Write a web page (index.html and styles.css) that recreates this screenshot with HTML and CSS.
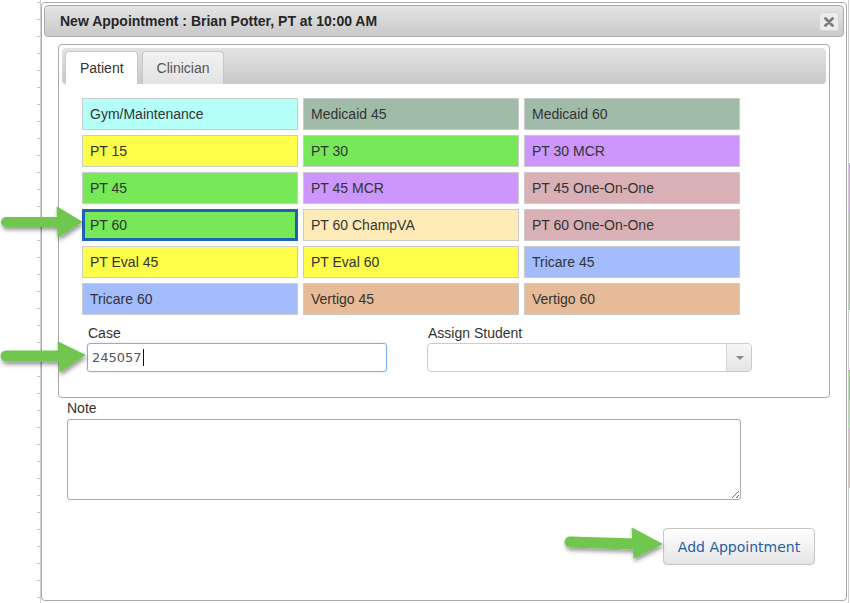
FILE: index.html
```html
<!DOCTYPE html>
<html>
<head>
<meta charset="utf-8">
<title>New Appointment</title>
<link rel="stylesheet" href="styles.css">
</head>
<body>
<div class="dialog">
  <div class="titlebar">
    <span class="title">New Appointment : Brian Potter, PT at 10:00 AM</span>
    <button class="close" aria-label="Close">
      <svg width="10" height="10" viewBox="0 0 10 10"><path d="M1.5 1.5 L8.5 8.5 M8.5 1.5 L1.5 8.5" stroke="#7a7a7a" stroke-width="2.8" stroke-linecap="round"/></svg>
    </button>
  </div>
  <div class="dialog-body">
    <div class="tabs">
      <div class="tab-nav">
        <div class="tab active">Patient</div>
        <div class="tab">Clinician</div>
      </div>
      <div class="tab-panel">
        <div class="types">
          <div class="type c-gym">Gym/Maintenance</div>
          <div class="type c-medicaid">Medicaid 45</div>
          <div class="type c-medicaid">Medicaid 60</div>
          <div class="type c-yellow">PT 15</div>
          <div class="type c-green">PT 30</div>
          <div class="type c-purple">PT 30 MCR</div>
          <div class="type c-green">PT 45</div>
          <div class="type c-purple">PT 45 MCR</div>
          <div class="type c-pink">PT 45 One-On-One</div>
          <div class="type c-green selected">PT 60</div>
          <div class="type c-champva">PT 60 ChampVA</div>
          <div class="type c-pink">PT 60 One-On-One</div>
          <div class="type c-yellow">PT Eval 45</div>
          <div class="type c-yellow">PT Eval 60</div>
          <div class="type c-tricare">Tricare 45</div>
          <div class="type c-tricare">Tricare 60</div>
          <div class="type c-vertigo">Vertigo 45</div>
          <div class="type c-vertigo">Vertigo 60</div>
        </div>
        <div class="fields">
          <div class="field field-case">
            <label class="label">Case</label>
            <div class="input"><span class="input-text">245057</span><span class="caret"></span></div>
          </div>
          <div class="field field-student">
            <label class="label">Assign Student</label>
            <div class="select">
              <span class="select-value"></span>
              <span class="select-arrow"><span class="tri"></span></span>
            </div>
          </div>
        </div>
      </div>
    </div>
    <div class="note">
      <label class="label">Note</label>
      <textarea class="textarea"></textarea>
    </div>
    <div class="actions">
      <button class="btn">Add Appointment</button>
    </div>
  </div>
</div>

<svg class="arrows" width="850" height="603" viewBox="0 0 850 603">
  <defs>
    <filter id="sh" x="-20%" y="-40%" width="140%" height="180%">
      <feDropShadow dx="1" dy="3" stdDeviation="2" flood-color="#000" flood-opacity="0.4"/>
    </filter>
  </defs>
  <g fill="#6fc64f" stroke="#6fc64f" filter="url(#sh)">
    <line x1="6" y1="222" x2="60" y2="222" stroke-width="10" stroke-linecap="round"/>
    <polygon points="57,207 82,222 58,237" stroke-width="1" stroke-linejoin="round"/>
  </g>
  <g fill="#6fc64f" stroke="#6fc64f" filter="url(#sh)">
    <line x1="6" y1="356" x2="62" y2="356" stroke-width="11" stroke-linecap="round"/>
    <polygon points="58,342 85,355 60,372" stroke-width="1" stroke-linejoin="round"/>
  </g>
  <g fill="#6fc64f" stroke="#6fc64f" filter="url(#sh)">
    <line x1="570" y1="542" x2="636" y2="544" stroke-width="11" stroke-linecap="round"/>
    <polygon points="632,528 662,544 634,558" stroke-width="1" stroke-linejoin="round"/>
  </g>
</svg>
</body>
</html>
```

FILE: styles.css
```css
* { box-sizing: border-box; }

html, body {
  margin: 0;
  padding: 0;
}

body {
  width: 850px;
  height: 603px;
  overflow: hidden;
  position: relative;
  padding: 2px 0 0 41px;
  font-family: "Liberation Sans", Arial, sans-serif;
  font-size: 14px;
  color: #333;
  background-color: #fff;
  background-image:
    linear-gradient(#d0d0d0, #d0d0d0),
    repeating-linear-gradient(to bottom, #c4c4c4 0 1px, transparent 1px 17px),
    linear-gradient(#cfcfcf, #cfcfcf),
    linear-gradient(#c9a4dc, #c9a4dc),
    linear-gradient(#a8bca9, #a8bca9),
    linear-gradient(#7fd35f, #7fd35f),
    linear-gradient(#a6e290, #a6e290),
    linear-gradient(#d8b4bb, #d8b4bb);
  background-repeat: no-repeat;
  background-position:
    40px 0,
    37px 2px,
    848px 0,
    848px 163px,
    848px 213px,
    848px 370px,
    848px 400px,
    848px 428px;
  background-size:
    1px 100%,
    3px 100%,
    1px 100%,
    2px 50px,
    2px 97px,
    2px 30px,
    2px 28px,
    2px 60px;
}

.dialog {
  width: 806px;
  height: 599px;
  border: 1px solid #a9a9a9;
  border-radius: 4px;
  padding: 2px;
  background: #fff;
  display: flex;
  flex-direction: column;
}

.titlebar {
  height: 32px;
  border: 1px solid #aaa;
  border-radius: 4px;
  background: linear-gradient(#e4e4e4, #c9c9c9);
  display: flex;
  align-items: center;
  justify-content: space-between;
  padding: 0 4px 0 15px;
}

.title {
  font-weight: bold;
  font-size: 14px;
  color: #262626;
}

.close {
  width: 20px;
  height: 19px;
  margin-top: 1px;
  padding: 0;
  border: 1px solid #d6d6d6;
  border-radius: 3px;
  background: #ececec;
  display: flex;
  align-items: center;
  justify-content: center;
}

.dialog-body {
  padding-top: 7px;
}

.tabs {
  margin-left: 14px;
  width: 772px;
  border: 1px solid #aaa;
  border-radius: 4px;
  padding: 3px;
}

.tab-nav {
  height: 36px;
  border-radius: 4px;
  background: linear-gradient(#e3e3e3, #c9c9c9);
  display: flex;
  align-items: flex-end;
  gap: 4px;
  padding: 3px 3px 0;
}

.tab {
  height: 33px;
  line-height: 32px;
  padding: 0 13px 0 14px;
  border: 1px solid #c8c8c8;
  border-bottom: none;
  border-radius: 4px 4px 0 0;
  background: linear-gradient(#f1f1f1, #e3e3e3);
  color: #555;
  font-size: 14px;
}

.tab.active {
  background: #fff;
  color: #333;
}

.tab-panel {
  padding: 14px 0 22px 20px;
}

.types {
  display: grid;
  grid-template-columns: repeat(3, 216px);
  grid-auto-rows: 32px;
  gap: 5px;
}

.type {
  border: 1px solid #cbcbcb;
  padding-left: 7px;
  line-height: 30px;
  font-size: 14px;
  color: #333;
  white-space: nowrap;
}

.type.selected {
  border: 3px solid #1d63ad;
  padding-left: 5px;
  line-height: 26px;
}

.c-gym { background: #b4fff8; }
.c-medicaid { background: #a0bba8; }
.c-yellow { background: #fdfd4a; }
.c-green { background: #77e858; }
.c-purple { background: #cc96fc; }
.c-pink { background: #d8b0b6; }
.c-champva { background: #ffebb8; }
.c-tricare { background: #a3bcfb; }
.c-vertigo { background: #e7bb97; }

.fields {
  display: flex;
  margin-top: 10px;
  padding-left: 5px;
  gap: 40px;
}

.field {
  display: flex;
  flex-direction: column;
}

.label {
  display: block;
  font-size: 14px;
  line-height: 17px;
  color: #333;
  margin-bottom: 1px;
  padding-left: 1px;
}

.input {
  width: 300px;
  height: 29px;
  border: 1px solid #7fb2e6;
  border-radius: 3px;
  box-shadow: 0 0 2px rgba(102, 175, 233, 0.5);
  padding-left: 4px;
  display: flex;
  align-items: center;
  font-family: "DejaVu Sans", Verdana, sans-serif;
  font-size: 13px;
  color: #555;
}

.caret {
  width: 1px;
  height: 17px;
  background: #111;
  margin-left: 1px;
}

.select {
  width: 325px;
  height: 29px;
  border: 1px solid #ccc;
  border-radius: 4px;
  display: flex;
  overflow: hidden;
}

.select-value {
  flex: 1;
}

.select-arrow {
  width: 25px;
  border-left: 1px solid #d4d4d4;
  background: linear-gradient(#f7f7f7, #e4e4e4);
  display: flex;
  align-items: center;
  justify-content: center;
}

.tri {
  width: 0;
  height: 0;
  border-left: 4px solid transparent;
  border-right: 4px solid transparent;
  border-top: 4px solid #8a8a8a;
  margin-left: 1px;
}

.note {
  margin: 2px 0 0 23px;
}

.note .label {
  padding-left: 0;
  margin-bottom: 2px;
}

.textarea {
  display: block;
  width: 674px;
  height: 81px;
  margin: 0;
  border: 1px solid #a9a9a9;
  border-radius: 3px;
  padding: 4px;
  font-family: "Liberation Sans", Arial, sans-serif;
  font-size: 14px;
}

.actions {
  display: flex;
  justify-content: flex-end;
  padding-right: 29px;
  margin-top: 28px;
}

.btn {
  width: 152px;
  height: 37px;
  border: 1px solid #c6c6c6;
  border-radius: 4px;
  background: linear-gradient(#ffffff, #e5e5e5);
  font-family: "DejaVu Sans", Verdana, sans-serif;
  font-size: 14px;
  color: #1f5ea8;
  padding: 0;
}

.arrows {
  position: absolute;
  left: 0;
  top: 0;
  pointer-events: none;
}
```
